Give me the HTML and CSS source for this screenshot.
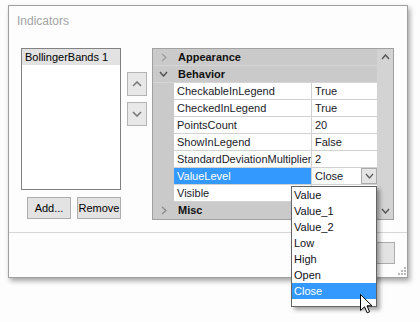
FILE: index.html
```html
<!DOCTYPE html>
<html lang="en">
<head>
    <meta charset="UTF-8">
    <meta name="viewport" content="width=device-width, initial-scale=1.0">
    <title>Indicators</title>
    <link rel="stylesheet" href="styles.css">
</head>
<body>
    <div class="window">
        <div class="title">Indicators</div>
        <div class="main">
            <div class="left">
                <div class="list">
                    <div class="list-item">BollingerBands 1</div>
                </div>
                <div class="actions">
                    <button class="btn">Add...</button>
                    <button class="btn">Remove</button>
                </div>
            </div>
            <div class="movers">
                <button class="mover">
                    <svg width="10" height="6" viewBox="0 0 10 6"><polyline points="1,5 5,1 9,5" fill="none" stroke="#7a7a7a" stroke-width="1.6"/></svg>
                </button>
                <button class="mover">
                    <svg width="10" height="6" viewBox="0 0 10 6"><polyline points="1,1 5,5 9,1" fill="none" stroke="#7a7a7a" stroke-width="1.6"/></svg>
                </button>
            </div>
            <div class="grid">
                <div class="rows">
                    <div class="row category">
                        <div class="margin"><svg width="6" height="9" viewBox="0 0 6 9"><polyline points="1,1 5,4.5 1,8" fill="none" stroke="#a0a0a0" stroke-width="1.4"/></svg></div>
                        <div class="cat-label">Appearance</div>
                    </div>
                    <div class="row category">
                        <div class="margin"><svg width="9" height="6" viewBox="0 0 9 6"><polyline points="1,1 4.5,5 8,1" fill="none" stroke="#505050" stroke-width="1.4"/></svg></div>
                        <div class="cat-label">Behavior</div>
                    </div>
                    <div class="row prop">
                        <div class="margin"></div>
                        <div class="name">CheckableInLegend</div>
                        <div class="value">True</div>
                    </div>
                    <div class="row prop">
                        <div class="margin"></div>
                        <div class="name">CheckedInLegend</div>
                        <div class="value">True</div>
                    </div>
                    <div class="row prop">
                        <div class="margin"></div>
                        <div class="name">PointsCount</div>
                        <div class="value">20</div>
                    </div>
                    <div class="row prop">
                        <div class="margin"></div>
                        <div class="name">ShowInLegend</div>
                        <div class="value">False</div>
                    </div>
                    <div class="row prop">
                        <div class="margin"></div>
                        <div class="name">StandardDeviationMultiplier</div>
                        <div class="value">2</div>
                    </div>
                    <div class="row prop selected">
                        <div class="margin"></div>
                        <div class="name">ValueLevel</div>
                        <div class="value editor">
                            <span>Close</span>
                            <span class="drop">
                                <svg width="9" height="6" viewBox="0 0 9 6"><polyline points="1,1 4.5,5 8,1" fill="none" stroke="#606060" stroke-width="1.3"/></svg>
                            </span>
                        </div>
                    </div>
                    <div class="row prop">
                        <div class="margin"></div>
                        <div class="name">Visible</div>
                        <div class="value"></div>
                    </div>
                    <div class="row category last">
                        <div class="margin"><svg width="6" height="9" viewBox="0 0 6 9"><polyline points="1,1 5,4.5 1,8" fill="none" stroke="#8c8c8c" stroke-width="1.4"/></svg></div>
                        <div class="cat-label">Misc</div>
                    </div>
                </div>
                <div class="scrollbar">
                    <svg width="9" height="6" viewBox="0 0 9 6"><polyline points="1,5 4.5,1 8,5" fill="none" stroke="#555" stroke-width="1.4"/></svg>
                    <svg width="9" height="6" viewBox="0 0 9 6"><polyline points="1,1 4.5,5 8,1" fill="none" stroke="#555" stroke-width="1.4"/></svg>
                </div>
            </div>
        </div>
        <div class="footer">
            <button class="btn wide"></button>
        </div>
        <svg class="grip" width="8" height="8" viewBox="0 0 8 8">
            <rect x="6" y="0" width="2" height="2" fill="#b8b8b8"/>
            <rect x="3" y="3" width="2" height="2" fill="#b8b8b8"/>
            <rect x="6" y="3" width="2" height="2" fill="#b8b8b8"/>
            <rect x="0" y="6" width="2" height="2" fill="#b8b8b8"/>
            <rect x="3" y="6" width="2" height="2" fill="#b8b8b8"/>
            <rect x="6" y="6" width="2" height="2" fill="#b8b8b8"/>
        </svg>

        <div class="popup">
            <div class="option">Value</div>
            <div class="option">Value_1</div>
            <div class="option">Value_2</div>
            <div class="option">Low</div>
            <div class="option">High</div>
            <div class="option">Open</div>
            <div class="option active">Close</div>
        </div>

        <svg class="cursor" width="13" height="20" viewBox="0 0 13 20">
            <path d="M0.5,0.5 L0.5,16.5 L4.5,12.8 L7.2,18.8 L9.6,17.8 L7,11.8 L12,11.8 Z" fill="#fff" stroke="#000" stroke-width="1" stroke-linejoin="miter"/>
        </svg>
    </div>
</body>
</html>
```

FILE: styles.css
```css
html {
    height: 100%;
}

body {
    box-sizing: border-box;
    min-height: 100%;
    margin: 0;
    padding: 5px 0 0 8px;
    background-color: #fdfdfd;
    font-family: 'Liberation Sans', Arial, sans-serif;
    font-size: 11px;
    color: #000;
}

.window {
    position: relative;
    box-sizing: border-box;
    width: 400px;
    height: 273px;
    border: 1px solid #a0a0a0;
    background-color: #fdfdfd;
    box-shadow: 2px 3px 5px rgba(0, 0, 0, 0.35);
}

.title {
    padding: 7px 0 0 8px;
    height: 16px;
    line-height: 16px;
    font-size: 12px;
    color: #a4a4a4;
}

.main {
    display: flex;
    margin-top: 19px;
    padding-left: 12px;
}

.left {
    width: 100px;
}

.list {
    box-sizing: border-box;
    height: 142px;
    border: 1px solid #828282;
    background-color: #fff;
}

.list-item {
    height: 16px;
    line-height: 16px;
    padding-left: 3px;
    background-color: #e2e2e2;
}

.actions {
    display: flex;
    justify-content: flex-end;
    gap: 6px;
    margin-top: 7px;
}

.btn {
    box-sizing: border-box;
    width: 44px;
    height: 22px;
    padding: 0;
    border: 1px solid #adadad;
    background-color: #e3e3e3;
    font-family: inherit;
    font-size: 11px;
    color: #000;
}

.movers {
    display: flex;
    flex-direction: column;
    gap: 6px;
    margin-left: 6px;
    padding-top: 24px;
}

.mover {
    box-sizing: border-box;
    width: 20px;
    height: 24px;
    padding: 0;
    border: 1px solid #b4b4b4;
    background-color: #e8e8e8;
    display: flex;
    align-items: center;
    justify-content: center;
}

.grid {
    display: flex;
    box-sizing: border-box;
    width: 242px;
    height: 172px;
    margin-left: 5px;
    border: 1px solid #a0a0a0;
    background-color: #cacaca;
}

.rows {
    width: 224px;
}

.row {
    display: grid;
    grid-template-columns: 21px 138px 65px;
    height: 17px;
    line-height: 16px;
}

.margin {
    display: flex;
    align-items: center;
    justify-content: center;
    height: 16px;
}

.category {
    box-sizing: border-box;
    border-bottom: 1px solid #d6d6d6;
}

.category.last {
    border-bottom: none;
}

.cat-label {
    grid-column: 2 / 4;
    padding-left: 4px;
    font-weight: bold;
    color: #111;
}

.name,
.value {
    box-sizing: border-box;
    height: 17px;
    padding-left: 3px;
    background-color: #fff;
    border-bottom: 1px solid #d2d2d2;
    white-space: nowrap;
    overflow: hidden;
    color: #1a1a2a;
}

.name {
    border-right: 1px solid #d2d2d2;
}

.selected .name {
    background-color: #3399ff;
    color: #fff;
}

.editor {
    display: flex;
    justify-content: space-between;
    padding-right: 0;
}

.drop {
    box-sizing: border-box;
    width: 16px;
    height: 16px;
    border: 1px solid #ababab;
    background-color: #e4e4e4;
    display: flex;
    align-items: center;
    justify-content: center;
}

.scrollbar {
    width: 16px;
    display: flex;
    flex-direction: column;
    align-items: center;
    justify-content: space-between;
    padding: 5px 0 5px;
    box-sizing: border-box;
    height: 170px;
    background-color: #d3d3d3;
}

.footer {
    margin-top: 12px;
    border-top: 1px solid #d6d6d6;
    padding: 9px 12px 0 0;
    display: flex;
    justify-content: flex-end;
}

.btn.wide {
    width: 75px;
}

.grip {
    position: absolute;
    right: 1px;
    bottom: 2px;
}

.popup {
    position: absolute;
    z-index: 2;
    left: 282px;
    top: 180px;
    box-sizing: border-box;
    width: 86px;
    height: 121px;
    padding-bottom: 7px;
    border: 1px solid #646464;
    background-color: #fff;
    box-shadow: 3px 3px 4px rgba(0, 0, 0, 0.35);
}

.option {
    height: 16px;
    line-height: 16px;
    padding-left: 2px;
    color: #101020;
}

.option.active {
    background-color: #3399ff;
    color: #fff;
}

.cursor {
    position: absolute;
    z-index: 3;
    left: 351px;
    top: 288px;
}
```
